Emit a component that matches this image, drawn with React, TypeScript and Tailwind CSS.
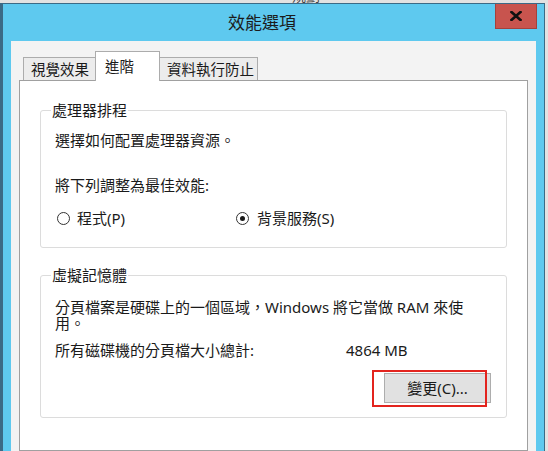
import React from "react";

const font = {
  fontFamily: '"Noto Sans", "Noto Sans CJK TC", sans-serif',
};

function Radio({ checked }: { checked?: boolean }) {
  return (
    <span className="w-[13px] h-[13px] rounded-full border border-[#333333] bg-white flex items-center justify-center shrink-0">
      {checked && <span className="w-[5px] h-[5px] rounded-full bg-[#1a1a1a]" />}
    </span>
  );
}

export default function App() {
  return (
    <div
      className="w-[548px] h-[451px] bg-[#e2e2e2] overflow-hidden flex flex-col text-[#1a1a1a]"
      style={font}
    >
      <div className="h-[3px] shrink-0 overflow-hidden">
        <div className="ml-[292px] -mt-[12px] text-[14px] leading-[16px] text-[#444]">規劃</div>
      </div>
      <div className="flex flex-1 min-h-0">
        <div className="w-[545px] shrink-0 flex flex-col border-l-[3px] border-t border-r border-[#3b6a86] bg-[#5ec9ef]">
          {/* Title bar */}
          <div className="h-[37px] shrink-0 flex items-start">
            <div className="flex-1 h-full flex items-center justify-center pl-[26px] text-[17px] leading-[22px] text-[#1b1b1b]">
              效能選項
            </div>
            <div className="w-[42px] h-[25px] mr-[7px] bg-[#c8544e] border border-[#a4413c] border-t-0 flex items-center justify-center">
              <svg width="12" height="10" viewBox="0 0 12 10">
                <path d="M1.5 1 L10.5 9 M10.5 1 L1.5 9" stroke="#111" strokeWidth="2.6" strokeLinecap="square" />
              </svg>
            </div>
          </div>
          {/* Client */}
          <div className="flex-1 mx-[8px] bg-[#f3f3f3] flex flex-col pt-[10px] px-[8px] min-h-0">
            {/* Tabs */}
            <div className="flex items-end pl-[4px] text-[14.5px] leading-[16px]">
              <div className="w-[73px] h-[23px] border border-b-0 border-[#acacac] bg-[#ececec] pl-[7px] flex items-center">
                視覺效果
              </div>
              <div className="relative z-10 w-[65px] h-[30px] -ml-[1px] -mb-[1px] border border-b-0 border-[#acacac] bg-white pl-[9px] pt-[6px]">
                進階
              </div>
              <div className="w-[99px] h-[23px] -ml-[1px] border border-b-0 border-[#acacac] bg-[#ececec] pl-[7px] flex items-center">
                資料執行防止
              </div>
            </div>
            {/* Panel */}
            <div className="flex-1 border border-[#a0a0a0] bg-white px-[20px] text-[15px] leading-[16px]">
              <fieldset className="mt-[21px] border border-[#dcdcdc] rounded-[3px] pl-[14px] pr-[15px] pt-[14px] pb-[21px]">
                <legend className="-ml-[4px] px-[1px] leading-[16px]">處理器排程</legend>
                <p>選擇如何配置處理器資源。</p>
                <p className="mt-[29px]">將下列調整為最佳效能:</p>
                <div className="mt-[17px] flex items-center h-[16px]">
                  <label className="w-[181px] flex items-center">
                    <span className="ml-[2px]"><Radio /></span>
                    <span className="ml-[7px]">程式(P)</span>
                  </label>
                  <label className="flex items-center">
                    <Radio checked />
                    <span className="ml-[8px]">背景服務(S)</span>
                  </label>
                </div>
              </fieldset>
              <fieldset className="mt-[19px] border border-[#dcdcdc] rounded-[3px] pl-[14px] pr-[15px] pt-[16px] pb-[14px]">
                <legend className="-ml-[4px] px-[1px] leading-[16px]">虛擬記憶體</legend>
                <p className="leading-[16px]">
                  分頁檔案是硬碟上的一個區域，Windows 將它當做 RAM 來使
                  <br />
                  用。
                </p>
                <div className="mt-[11px] flex">
                  <span className="w-[291px]">所有磁碟機的分頁檔大小總計:</span>
                  <span>4864 MB</span>
                </div>
                <div className="mt-[15px] flex justify-end">
                  <div className="relative">
                    <button className="w-[107px] h-[30px] bg-[#e1e1e1] border border-[#adadad] flex items-center justify-center text-[15px]">
                      變更(C)...
                    </button>
                    <div className="absolute -left-[12px] -top-[3px] w-[115px] h-[37px] border-2 border-[#e3241e]" />
                  </div>
                </div>
              </fieldset>
            </div>
          </div>
        </div>
        <div className="flex-1 bg-[#e2e2e2]" />
      </div>
    </div>
  );
}
